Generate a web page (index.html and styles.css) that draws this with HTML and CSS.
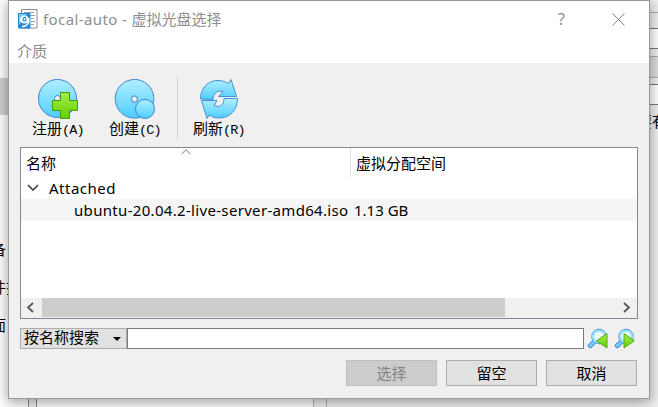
FILE: index.html
```html
<!DOCTYPE html>
<html lang="zh-CN">
<head>
<meta charset="utf-8">
<title>focal-auto - 虚拟光盘选择</title>
<link rel="stylesheet" href="styles.css">
</head>
<body>
<svg class="defs" width="0" height="0" aria-hidden="true">
  <defs>
    <linearGradient id="blue" x1="0" y1="0" x2="0" y2="1"><stop offset="0" stop-color="#b0efff"/><stop offset="1" stop-color="#4fcdff"/></linearGradient>
    <linearGradient id="green" x1="0" y1="0" x2="0" y2="1"><stop offset="0" stop-color="#a5ee46"/><stop offset="1" stop-color="#62cf06"/></linearGradient>
  </defs>
</svg>
<div class="backdrop">
  <div class="nav">
    <div class="nav-selected"></div>
    <span>备</span><span>件挂</span><span>面</span>
  </div>
  <div class="splitter"></div>
  <div class="pane"></div>
  <div class="splitter wide"></div>
  <div class="form">
    <div class="form-top"></div>
    <div class="field"></div>
    <div class="form-button"></div>
    <div class="field second"></div>
    <div class="hint">要有</div>
  </div>
</div>

<main class="dialog">
  <header class="titlebar">
    <svg class="app-icon" width="20" height="20" viewBox="0 0 20 20">
      <path d="M3.500.5h15.500v18.500H3.500z" fill="#fff" stroke="#8b8b8b"/>
      <path d="M6 3.500h10M12 6.500h5M13 9.500h3M13 12.500h4M13 15.500h3" stroke="#9c9c9c"/>
      <path d="M0 4h12.500v15.500H0z" fill="#2587d8"/>
      <path d="M1 5h8L1 16z" fill="#79ccf8"/>
      <ellipse cx="6.500" cy="10.500" rx="4.500" ry="4" fill="#fff"/>
      <path d="M10.500 9C12 14 9 17.500 4 17.500" fill="none" stroke="#fff" stroke-width="1.600"/>
      <path d="M8 8.500C4.500 8 4 12 6.500 12C8.500 12 8.500 9.500 7 10" fill="none" stroke="#2587d8" stroke-width="1.200"/>
    </svg>
    <h1><b>focal-auto - </b>虚拟光盘选择</h1>
    <span class="help">?</span>
    <svg class="close" width="13" height="13" viewBox="0 0 13 13"><path d="M.5.5l12 12M12.500.5l-12 12" stroke="#858585" fill="none"/></svg>
  </header>
  <nav class="menubar">介质</nav>

  <div class="toolbar">
    <button class="tool">
      <svg width="42" height="42" viewBox="0 0 42 42">
        <path fill-rule="evenodd" d="M20.500 1.500a19 19 0 1 0 .01 0zM20.500 17.500a3 3 0 1 1-.01 0z" fill="url(#blue)" stroke="#3f86d0"/>
        <path d="M23.500 14.500h9v8h8v10h-8v8h-9v-8h-8v-10h8z" fill="url(#green)" stroke="#469b13"/>
      </svg>
      <span>注册<i>(A)</i></span>
    </button>
    <button class="tool">
      <svg width="42" height="42" viewBox="0 0 42 42">
        <path d="M20.500 1.500a19.300 19.300 0 1 0 .01 0z" fill="url(#blue)" stroke="#3f86d0"/>
        <circle cx="20.500" cy="21" r="3" fill="#f4f4f4" stroke="#6aa5d6" stroke-width="1.500"/>
        <circle cx="31" cy="31" r="9.500" fill="url(#blue)" stroke="#3f86d0"/>
      </svg>
      <span>创建<i>(C)</i></span>
    </button>
    <div class="tool-separator"></div>
    <button class="tool">
      <svg width="42" height="42" viewBox="0 0 42 42">
        <path d="M2.500 21C2.500 10 10 2.500 20 2.500C24 2.500 28 4 30.500 5.500L33 1.500L38.500 18.500H20.500L25 13.500C20 12 15 15 15 21.500z" fill="url(#blue)" stroke="#4590d7"/>
        <path d="M39.500 20.500C39.500 32 32 40 21 40C17 40 14 39 11.500 37L9 40.500L3.500 22.500H19L16 27.500C22 30 26 27 26 20.500z" fill="url(#blue)" stroke="#4590d7"/>
      </svg>
      <span>刷新<i>(R)</i></span>
    </button>
  </div>

  <section class="media-list">
    <div class="columns">
      <div class="col-name">名称
        <svg class="sort" width="10" height="6" viewBox="0 0 10 6"><path d="M.5 5L5 .8L9.500 5" fill="none" stroke="#777"/></svg>
      </div>
      <div class="col-size">虚拟分配空间</div>
    </div>
    <div class="row group">
      <svg width="12" height="8" viewBox="0 0 12 8"><path d="M1 1l5 5 5-5" fill="none" stroke="#444" stroke-width="1.700"/></svg>
      <span class="group-name">Attached</span>
    </div>
    <div class="row item">
      <span class="item-name">ubuntu-20.04.2-live-server-amd64.iso</span>
      <span class="item-size">1.13 GB</span>
    </div>
    <div class="scrollbar">
      <svg width="21" height="19" viewBox="0 0 21 19"><path d="M12 5L7 9.500l5 4.500" fill="none" stroke="#555" stroke-width="1.800"/></svg>
      <div class="thumb"></div>
      <svg class="right" width="21" height="19" viewBox="0 0 21 19"><path d="M8 5l5 4.500L8 14" fill="none" stroke="#555" stroke-width="1.800"/></svg>
    </div>
  </section>

  <div class="search">
    <div class="combo"><span>按名称搜索</span><svg width="8" height="4" viewBox="0 0 8 4"><path d="M0 0h8L4 4z"/></svg></div>
    <input type="text" aria-label="搜索">
    <svg class="find" width="21" height="21" viewBox="0 0 21 21">
      <path d="M6.500 12L1.500 16.500Q.5 18 2 19.300T5 19L9 14.500z" fill="#74c9fb" stroke="#3b87cf"/>
      <circle cx="12" cy="8.500" r="7.300" fill="#fff" stroke="#3d93dc"/>
      <circle cx="12" cy="8.500" r="5.800" fill="#f0fbff" stroke="#93e0ff" stroke-width="2"/>
      <path d="M20 5.500v14.500L9.500 12.800z" fill="url(#green)" stroke="#55aa18"/>
    </svg>
    <svg class="find" width="21" height="21" viewBox="0 0 21 21">
      <path d="M6.500 12L1.500 16.500Q.5 18 2 19.300T5 19L9 14.500z" fill="#74c9fb" stroke="#3b87cf"/>
      <circle cx="12" cy="8.500" r="7.300" fill="#fff" stroke="#3d93dc"/>
      <circle cx="12" cy="8.500" r="5.800" fill="#f0fbff" stroke="#93e0ff" stroke-width="2"/>
      <path d="M10 5.500v14.500L20.300 12.800z" fill="url(#green)" stroke="#55aa18"/>
    </svg>
  </div>

  <footer class="actions">
    <button disabled>选择</button>
    <button>留空</button>
    <button>取消</button>
  </footer>
</main>
</body>
</html>
```
FILE: styles.css
```css
* { box-sizing: border-box; }
body {
  margin: 0;
  width: 658px;
  height: 407px;
  position: relative;
  overflow: hidden;
  background: #fff;
  color: #000;
  font: 15px/20px "Noto Sans", "Noto Sans CJK SC", sans-serif;
}
svg { display: block; flex: none; }
.defs { position: absolute; }
button { font: inherit; color: inherit; padding: 0; }

.backdrop { display: flex; height: 407px; }
.nav { flex: none; width: 28px; padding-top: 78px; background: #fff; white-space: nowrap; overflow: hidden; }
.nav span { display: block; height: 20px; margin-bottom: 18px; margin-left: -9px; }
.nav-selected { height: 37px; margin-bottom: 124px; background: #d0d0d0; }
.splitter { flex: none; width: 9px; background: #f0f0f0; border: solid #828790; border-width: 0 1px; }
.pane { flex: none; width: 276px; background: #fff; }
.splitter.wide { width: 14px; border-color: #b5b5b5; }
.form { flex: 1; min-width: 0; overflow: hidden; background: #f0f0f0; }
.form-top { height: 13px; margin-bottom: 15px; border-bottom: 1px solid #aaa; }
.field { height: 21px; border: 1px solid #777; border-width: 1px 0; background: #fff; }
.form-button { height: 22px; margin-top: 7px; background: #ddd; border: 1px solid #adadad; border-width: 1px 0; }
.field.second { margin-top: 6px; }
.hint { margin: 6px 0 0 310px; width: 30px; }

.dialog {
  position: absolute;
  left: 8px;
  top: 0;
  width: 642px;
  height: 399px;
  background: #f0f0f0;
  border: 1px solid #999;
  box-shadow: 0 3px 12px 1px rgba(0, 0, 0, .35);
}
.titlebar { height: 37px; display: flex; align-items: center; padding: 0 24px 0 9px; background: #fff; color: #8e8e8e; }
.app-icon { margin-top: -1px; }
h1 { flex: 1; margin: -2px 0 0 5px; font-size: 15px; font-weight: 400; }
h1 b { font-weight: 400; letter-spacing: .4px; }
.help { width: 9px; margin: -2px 46px 0 0; font-size: 16px; text-align: center; }
.menubar { height: 25px; padding: 3px 0 0 8px; background: #fff; color: #8e8e8e; }

.toolbar { height: 84px; display: flex; padding: 15px 0 0 20px; }
.tool { width: 58px; margin-right: 19px; display: flex; flex-direction: column; align-items: center; border: 0; background: none; line-height: 17px; white-space: nowrap; }
.tool span { width: 52px; text-align: left; }
.tool i { font: 13.500px/17px "Liberation Mono", monospace; letter-spacing: -.9px; }
.tool-separator { width: 1px; height: 60px; margin: 0 -3px 0 -6px; background: #d2d2d2; }
.tool:last-child { margin-left: 15px; }

.media-list { width: 618px; height: 172px; margin-left: 11px; border: 1px solid #828790; background: #fff; display: flex; flex-direction: column; }
.columns { height: 30px; display: flex; line-height: 31px; }
.col-name { width: 330px; height: 29px; padding-left: 5px; border-right: 1px solid #e0e0e0; position: relative; }
.sort { position: absolute; left: 160px; top: 1px; }
.col-size { padding-left: 5px; }
.row { display: flex; align-items: center; white-space: nowrap; }
.group { height: 21px; padding: 0 0 2px 6px; }
.group-name { margin-left: 10px; letter-spacing: .5px; }
.item { height: 22px; padding-left: 53px; background: #f5f5f5; }
.item-name { width: 280px; letter-spacing: .32px; }
.scrollbar { margin-top: auto; height: 20px; display: flex; background: #f0f0f0; }
.thumb { width: 463px; height: 19px; background: #cdcdcd; }
.scrollbar .right { margin-left: auto; }

.search { display: flex; height: 21px; margin: 9px 0 0 11px; }
.combo { width: 107px; display: flex; align-items: center; justify-content: space-between; padding: 0 5px 0 3px; border: 1px solid #adadad; background: #e1e1e1; line-height: 17px; }
.combo span { margin-top: -2px; }
.search input { width: 457px; height: 21px; padding: 0 3px; border: 1px solid #7a7a7a; background: #fff; }
.find { margin-left: 3px; }
.find + .find { margin-left: 6px; }

.actions { display: flex; justify-content: flex-end; gap: 9px; margin: 11px 12px 0 0; }
.actions button { width: 91px; height: 26px; border: 1px solid #adadad; background: #e1e1e1; line-height: 22px; }
.actions button:disabled { background: #ccc; border-color: #bfbfbf; color: #838383; }
```
